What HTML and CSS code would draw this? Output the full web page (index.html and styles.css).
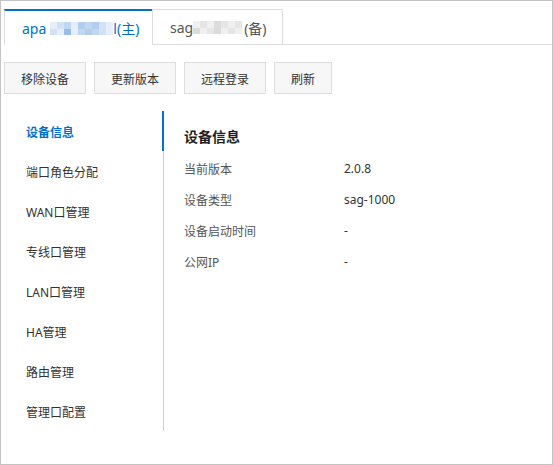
FILE: index.html
```html
<!DOCTYPE html>
<html lang="zh-CN">
<head>
<meta charset="utf-8">
<title>设备信息</title>
<link rel="stylesheet" href="styles.css">
</head>
<body>
<div class="frame">
  <div class="tabs">
    <div class="tab tab-active">apa<span class="mosaic mosaic-blue"><i class="c1"></i><i class="c2"></i><i class="c3"></i><i class="c1"></i><i class="c4"></i><i class="c3"></i><i class="c4"></i><i class="c2"></i><i class="c1"></i><i class="c2"></i><i class="c1"></i><i class="c5"></i><i class="c1"></i><i class="c3"></i><i class="c4"></i><i class="c3"></i><i class="c2"></i><i class="c1"></i></span>l(主)</div>
    <div class="tab tab-second">sag<span class="mosaic mosaic-gray"><i class="g1"></i><i class="g2"></i><i class="g1"></i><i class="g3"></i><i class="g2"></i><i class="g1"></i><i class="g2"></i><i class="g3"></i><i class="g1"></i><i class="g2"></i><i class="g3"></i><i class="g1"></i><i class="g2"></i><i class="g1"></i></span>(备)</div>
  </div>
  <div class="toolbar">
    <button class="btn">移除设备</button>
    <button class="btn">更新版本</button>
    <button class="btn">远程登录</button>
    <button class="btn">刷新</button>
  </div>
  <div class="main">
    <ul class="nav">
      <li class="nav-item active">设备信息</li>
      <li class="nav-item">端口角色分配</li>
      <li class="nav-item">WAN口管理</li>
      <li class="nav-item">专线口管理</li>
      <li class="nav-item">LAN口管理</li>
      <li class="nav-item">HA管理</li>
      <li class="nav-item">路由管理</li>
      <li class="nav-item">管理口配置</li>
    </ul>
    <div class="content">
      <h2 class="title">设备信息</h2>
      <dl class="info">
        <dt>当前版本</dt><dd>2.0.8</dd>
        <dt>设备类型</dt><dd>sag-1000</dd>
        <dt>设备启动时间</dt><dd>-</dd>
        <dt>公网IP</dt><dd>-</dd>
      </dl>
    </div>
  </div>
</div>
</body>
</html>
```

FILE: styles.css
```css
* { box-sizing: border-box; }
html, body { margin: 0; padding: 0; background: #fff; }
body {
  font-family: "Noto Sans", "Noto Sans CJK SC", sans-serif;
  color: #333;
}
.frame {
  width: 553px;
  height: 465px;
  border: 1px solid #c4c4c4;
  padding: 8px 0 0 3px;
}
.tabs {
  display: flex;
  align-items: flex-end;
  border-bottom: 1px solid #ddd;
  height: 36px;
}
.tab {
  display: flex;
  align-items: center;
  font-size: 14px;
  padding-left: 17px;
  background: #fff;
  white-space: nowrap;
}
.tab-active {
  width: 148px;
  height: 36px;
  margin-bottom: -1px;
  border-top: 2px solid #0070cc;
  border-left: 1px solid #ddd;
  color: #0070cc;
}
.tab-second {
  width: 131px;
  height: 35px;
  border: 1px solid #ddd;
  border-bottom: none;
  color: #555;
  padding-top: 1px;
}
.mosaic {
  display: inline-grid;
  grid-template-rows: 7px 6px;
  margin: 0 0 0 4px;
  align-self: center;
}
.mosaic-blue { grid-template-columns: repeat(9, 7px); width: 63px; }
.mosaic-gray { grid-template-columns: repeat(7, 7px); width: 49px; margin-left: 0; margin-right: 2px; }
.mosaic i { display: block; }
.c1 { background: #e6eff9; }
.c2 { background: #d2e2f5; }
.c3 { background: #c1d7f1; }
.c4 { background: #b3cdee; }
.c5 { background: #99bce7; }
.g1 { background: #f0f0f0; }
.g2 { background: #e6e6e6; }
.g3 { background: #dcdcdc; }
.toolbar {
  display: flex;
  gap: 8px;
  margin-top: 17px;
}
.btn {
  height: 32px;
  padding: 0 16px;
  border: 1px solid #ddd;
  background: #f7f7f7;
  color: #333;
  font-family: "Noto Sans CJK SC", sans-serif;
  font-size: 12px;
  min-width: 58px;
}
.btn:nth-child(-n+3) { width: 82px; }
.main {
  display: flex;
  margin-top: 17px;
}
.nav {
  list-style: none;
  margin: 0;
  padding: 0;
  width: 160px;
  border-right: 1px solid #ccc;
}
.nav-item {
  height: 40px;
  line-height: 40px;
  padding: 3px 0 0 22px;
  line-height: 37px;
  font-family: "Noto Sans", "Noto Sans CJK SC", sans-serif;
  font-size: 12px;
  color: #333;
}
.nav-item.active {
  color: #0070cc;
  font-weight: bold;
  margin-right: -1px;
  border-right: 2px solid #0070cc;
}
.content {
  padding-left: 20px;
}
.title {
  margin: 16px 0 0;
  font-size: 14px;
  line-height: 20px;
  font-weight: bold;
  color: #222;
}
.info {
  display: grid;
  grid-template-columns: 160px auto;
  grid-auto-rows: 31px;
  align-items: center;
  margin: 6px 0 0;
  font-size: 12px;
}
.info dt { color: #555; }
.info dd { margin: 0; color: #333; }
```
